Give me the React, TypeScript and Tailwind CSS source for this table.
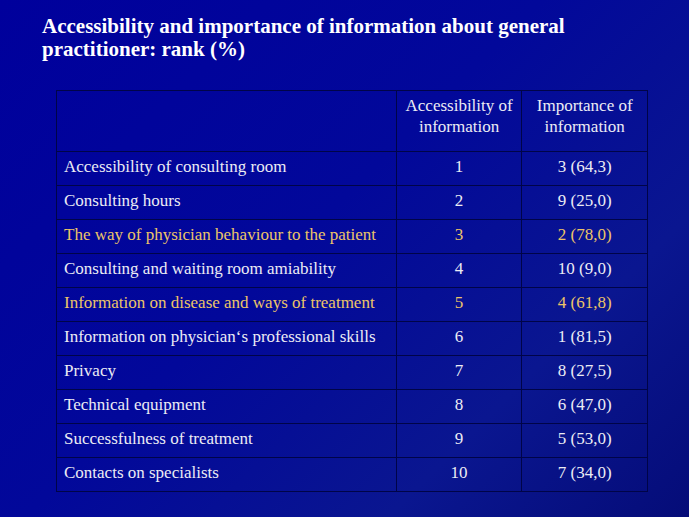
const rows: { label: string; acc: string; imp: string; hl?: boolean }[] = [
  { label: "Accessibility of consulting room", acc: "1", imp: "3 (64,3)" },
  { label: "Consulting hours", acc: "2", imp: "9 (25,0)" },
  { label: "The way of physician behaviour to the patient", acc: "3", imp: "2 (78,0)", hl: true },
  { label: "Consulting and waiting room amiability", acc: "4", imp: "10 (9,0)" },
  { label: "Information on disease and ways of treatment", acc: "5", imp: "4 (61,8)", hl: true },
  { label: "Information on physician‘s professional skills", acc: "6", imp: "1 (81,5)" },
  { label: "Privacy", acc: "7", imp: "8 (27,5)" },
  { label: "Technical equipment", acc: "8", imp: "6 (47,0)" },
  { label: "Successfulness of treatment", acc: "9", imp: "5 (53,0)" },
  { label: "Contacts on specialists", acc: "10", imp: "7 (34,0)" },
];

export default function App() {
  return (
    <div
      className="h-[517px] w-[689px] overflow-hidden bg-[linear-gradient(135deg,#00009c_0%,#02089a_45%,#0a1690_75%,#050c78_100%)] font-['Liberation_Serif',serif] text-[#ececf4]"
    >
      <h1 className="pl-[42px] pt-[15px] text-[21px] font-bold leading-[23px] text-white">
        Accessibility and importance of information about general
        <br />
        practitioner: rank (%)
      </h1>

      <div className="pl-[56px] pt-[29px]">
        <table className="w-[592px] border-collapse border border-[#000448] text-[17px]">
          <thead>
            <tr className="h-[61px]">
              <th className="w-[340px] border border-[#000448]" />
              <th className="w-[126px] border border-[#000448] pt-[4px] align-top font-normal leading-[21px]">
                Accessibility of
                <br />
                information
              </th>
              <th className="w-[126px] border border-[#000448] pt-[4px] align-top font-normal leading-[21px]">
                Importance of
                <br />
                information
              </th>
            </tr>
          </thead>
          <tbody>
            {rows.map((r) => (
              <tr
                key={r.label}
                className={r.hl ? "h-[34px] text-[#ecc468]" : "h-[34px]"}
              >
                <td className="border border-[#000448] pb-[3px] pl-[7px] whitespace-nowrap">
                  {r.label}
                </td>
                <td className="border border-[#000448] pb-[3px] text-center">{r.acc}</td>
                <td className="border border-[#000448] pb-[3px] text-center">{r.imp}</td>
              </tr>
            ))}
          </tbody>
        </table>
      </div>
    </div>
  );
}
